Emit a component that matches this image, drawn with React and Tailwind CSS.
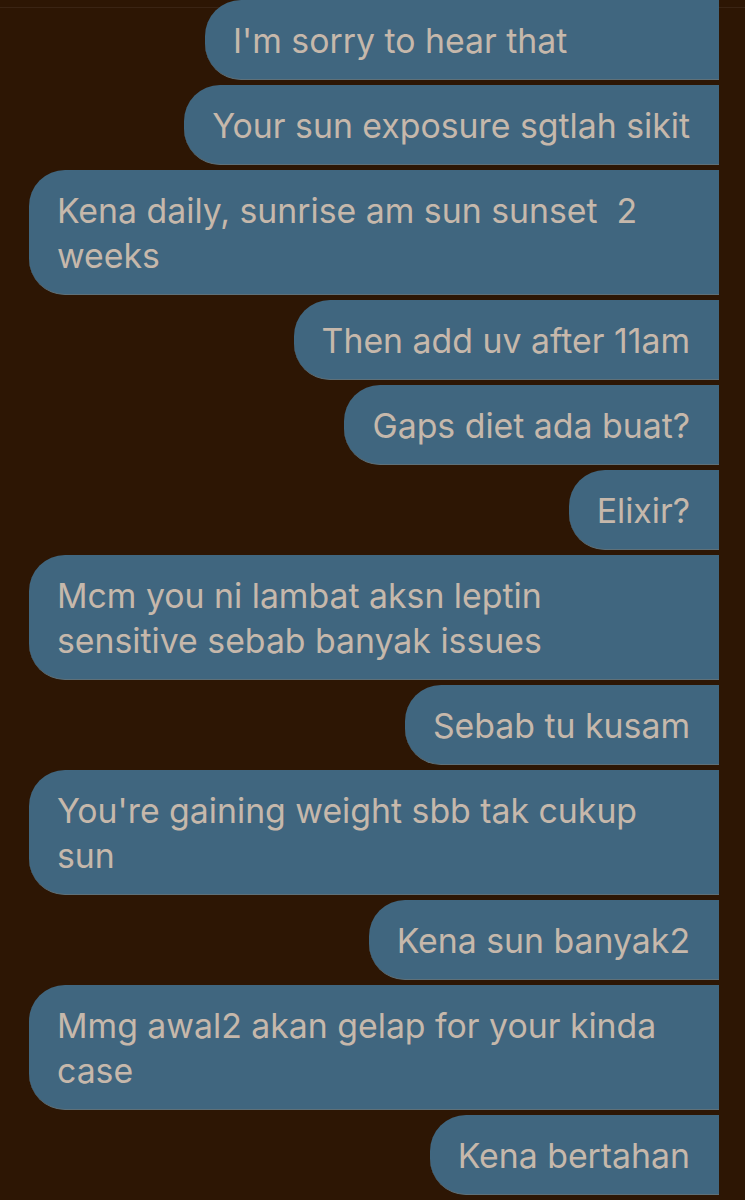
import React from "react";

const messages = [
  "I'm sorry to hear that",
  "Your sun exposure sgtlah sikit",
  "Kena daily, sunrise am sun sunset  2 weeks",
  "Then add uv after 11am",
  "Gaps diet ada buat?",
  "Elixir?",
  "Mcm you ni lambat aksn leptin sensitive sebab banyak issues",
  "Sebab tu kusam",
  "You're gaining weight sbb tak cukup sun",
  "Kena sun banyak2",
  "Mmg awal2 akan gelap for your kinda case",
  "Kena bertahan",
];

export default function App() {
  return (
    <div
      className="w-[745px] h-[1200px] overflow-hidden bg-[#2d1604]"
      style={{ fontFamily: "Inter, 'Noto Sans', sans-serif" }}
    >
      <div className="h-[8px] border-b border-[#3a2414]" />
      <div className="flex flex-col items-end gap-[5px] pr-[26px] pl-[29px]">
        {messages.map((m, i) => (
          <div
            key={i}
            className={
              "max-w-[690px] rounded-l-[36px] bg-[#40667f] pl-[28px] pr-[29px] pt-[17.5px] pb-[16.5px] text-[33.8px] leading-[45px] text-[#c6b8ab] whitespace-pre-wrap border-b border-[#5f7078] " +
              (i === 0 ? "-mt-[8px] w-[514px]" : "")
            }
          >
            {m}
          </div>
        ))}
        <div className="w-[589px] h-[80px] shrink-0 rounded-l-[36px] bg-[#40667f]" />
      </div>
    </div>
  );
}
